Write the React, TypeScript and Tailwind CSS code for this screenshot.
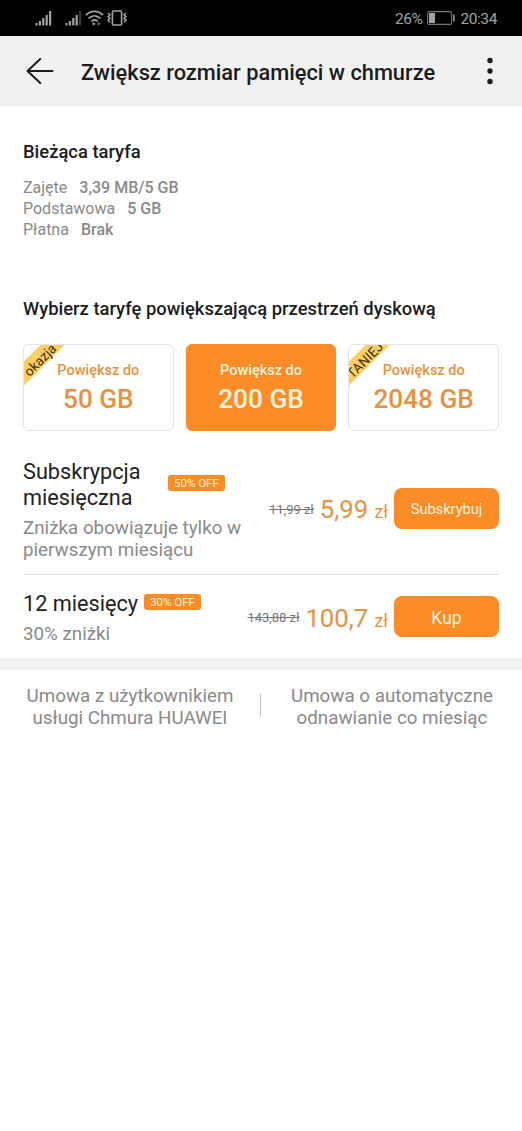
import clsx from "clsx"

interface Tariff {
  size: string
  ribbon?: string
  active?: boolean
}

interface Offer {
  title: string
  badge: string
  note: string
  oldPrice: string
  price: string
  action: string
}

const tariffs: Tariff[] = [
  { size: "50 GB", ribbon: "okazja" },
  { size: "200 GB", active: true },
  { size: "2048 GB", ribbon: "TANIEJ" },
]

const offers: Offer[] = [
  {
    title: "Subskrypcja miesięczna",
    badge: "50% OFF",
    note: "Zniżka obowiązuje tylko w pierwszym miesiącu",
    oldPrice: "11,99 zł",
    price: "5,99",
    action: "Subskrybuj",
  },
  {
    title: "12 miesięcy",
    badge: "30% OFF",
    note: "30% zniżki",
    oldPrice: "143,88 zł",
    price: "100,7",
    action: "Kup",
  },
]

const usage = [
  { label: "Zajęte", value: "3,39 MB/5 GB" },
  { label: "Podstawowa", value: "5 GB" },
  { label: "Płatna", value: "Brak" },
]

function SignalIcon({ weak = false }: { weak?: boolean }) {
  return (
    <svg width="17" height="16" viewBox="0 0 17 16" fill="#a3a3a3">
      <rect x="0.5" y="13" width="2" height="2.5" />
      <rect x="3.8" y="11" width="2.2" height="4.5" />
      <rect x="7.2" y="8" width="2.2" height="7.5" />
      <rect x="10.6" y="5" width="2.2" height="10.5" />
      <rect x="14" y="1" width="2.2" height="14.5" fill={weak ? "#3a3a3a" : "#a3a3a3"} />
    </svg>
  )
}

function StatusBar() {
  return (
    <div className="flex h-9 items-center justify-between bg-black pr-[25px] pl-[35px] text-[#a3a3a3]">
      <div className="flex items-center">
        <SignalIcon />
        <span className="w-[13px]" />
        <SignalIcon weak />
        {/* Wi-Fi */}
        <svg className="ml-[3px]" width="19" height="16" viewBox="0 0 19 16" fill="none" stroke="#a3a3a3" strokeWidth="1.8">
          <path d="M1 5.2C6 .2 13 .2 18 5.2M3.6 8.4c3.6-3.5 8.2-3.5 11.8 0M6.3 11.4c2-1.8 4.4-1.8 6.4 0" />
          <path d="M7.2 13.8h3M8.7 12.6v2.6" strokeWidth="1.3" />
          <path d="M12.4 13.8h3M13.2 12.6v2.6" stroke="#777" strokeWidth="1.2" />
        </svg>
        {/* Vibration */}
        <svg className="ml-[3px]" width="20" height="16" viewBox="0 0 20 16" fill="none" stroke="#a3a3a3" strokeWidth="1.6">
          <rect x="5.4" y="1" width="9.2" height="14" rx="1" />
          <path d="M1 3l2 1.8-2 1.8 2 1.8-2 1.8 2 2M19 3l-2 1.8 2 1.8-2 1.8 2 1.8-2 2" strokeWidth="1.5" />
        </svg>
      </div>
      <div className="flex items-center text-[15.5px] leading-none">
        <span className="pt-[3px] tracking-[-0.5px]">26%</span>
        <svg className="mx-[5px]" width="28" height="14" viewBox="0 0 28 14">
          <rect x=".6" y=".6" width="24" height="12.8" rx="1.5" fill="none" stroke="#777" strokeWidth="1.1" />
          <rect x="2" y="2" width="6" height="10" fill="#a3a3a3" />
          <rect x="26" y="3.5" width="1.8" height="7" fill="#888" />
        </svg>
        <span className="pt-[3px] tracking-[-0.4px]">20:34</span>
      </div>
    </div>
  )
}

function Header() {
  return (
    <header className="flex h-[70px] items-center bg-[#f1f1f1] pr-[28px] pl-[26px] text-[#1c1c1c]">
      <svg width="28" height="28" viewBox="0 0 28 28" fill="none" stroke="currentColor" strokeWidth="2" strokeLinecap="round" strokeLinejoin="round">
        <path d="M14.2 2L1.5 14l12.7 12M1.5 14h25" />
      </svg>
      <h1 className="ml-[27px] flex-1 pt-1 text-[21.8px] font-medium whitespace-nowrap">
        Zwiększ rozmiar pamięci w chmurze
      </h1>
      <svg width="8" height="28" viewBox="0 0 8 28" fill="currentColor">
        <circle cx="4" cy="3.5" r="2.7" />
        <circle cx="4" cy="14" r="2.7" />
        <circle cx="4" cy="24.5" r="2.7" />
      </svg>
    </header>
  )
}

function TariffCard({ size, ribbon, active }: Tariff) {
  return (
    <button
      className={clsx(
        "relative h-[87px] flex-1 overflow-hidden rounded-md border font-medium",
        active ? "border-[#fb8c28] bg-[#fb8c28] text-[#fff5dc]" : "border-[#e4e4e4] bg-white text-[#e8923f]"
      )}
    >
      {ribbon && (
        <span className="absolute top-[6px] -left-[26px] h-[17px] w-20 -rotate-45 bg-[#fdcf62] pl-[2px] text-center text-[13.5px] leading-[21px] font-normal text-[#3a2d10]">
          {ribbon}
        </span>
      )}
      <span className="block text-[14.5px] leading-5">Powiększ do</span>
      <span className="mt-[3px] block text-[26.2px] leading-[30px]">{size}</span>
    </button>
  )
}

function OfferRow({ title, badge, note, oldPrice, price, action }: Offer) {
  const isLong = action.length > 5

  return (
    <div className="flex items-center">
      <div className="w-[221px] shrink-0">
        <div className="flex items-center">
          <h3 className="max-w-[139px] text-[21.7px] leading-[26px] text-[#222]">{title}</h3>
          <span className="mb-[5px] ml-[6px] h-4 rounded-[3px] bg-[#fb8c28] px-[6px] text-[11.5px] leading-4 whitespace-nowrap text-[#fff5dc]">
            {badge}
          </span>
        </div>
        <p className="mt-[6px] text-[18.8px] leading-[22px] text-[#8a8a8a]">{note}</p>
      </div>
      <div className={clsx("flex flex-1 items-center", isLong ? "pb-1" : "pb-[3px]")}>
        <div className="flex flex-1 items-center justify-end whitespace-nowrap text-[#e8923f]">
          <span className="pt-[3px] text-[12.9px] text-[#777] line-through">{oldPrice}</span>
          <span className="ml-[6px] pt-[5px] text-[25.7px] leading-8">
            {price} <span className="text-[17.5px]">zł</span>
          </span>
        </div>
        <button
          className={clsx(
            "ml-[6px] h-[41px] w-[105px] shrink-0 rounded-lg bg-[#fb8c28] pt-[3px] text-[#fff5dc]",
            isLong ? "text-[14.6px]" : "text-[17.5px]"
          )}
        >
          {action}
        </button>
      </div>
    </div>
  )
}

export default function App() {
  return (
    <div className="min-h-screen bg-white font-[Roboto,sans-serif]">
      <StatusBar />
      <Header />

      <main>
        <section className="px-[23px] pt-[34px]">
          <h2 className="text-[18.4px] leading-6 font-medium text-[#1c1c1c]">Bieżąca taryfa</h2>
          <dl className="mt-[13px] text-[16px] leading-[21px] text-[#8a8a8a]">
            {usage.map((item) => (
              <div key={item.label} className="flex gap-3">
                <dt>{item.label}</dt>
                <dd className="font-medium">{item.value}</dd>
              </div>
            ))}
          </dl>
        </section>

        <section className="px-[23px] pt-[57px]">
          <h2 className="text-[18.4px] leading-6 font-medium whitespace-nowrap text-[#1c1c1c]">
            Wybierz taryfę powiększającą przestrzeń dyskową
          </h2>
          <div className="mt-[23px] flex gap-3">
            {tariffs.map((tariff) => (
              <TariffCard key={tariff.size} {...tariff} />
            ))}
          </div>
        </section>

        <section className="px-[23px] pt-[28px] pb-[13px]">
          <OfferRow {...offers[0]} />
          <hr className="mt-[13px] mb-4 border-[#dedede]" />
          <OfferRow {...offers[1]} />
        </section>

        <div className="h-3 bg-[#f2f2f2]" />

        <footer className="flex items-center pt-[15px] text-center text-[18.8px] leading-[22px] text-[#8a8a8a]">
          <a className="flex-1">
            Umowa z użytkownikiem
            <br />
            usługi Chmura HUAWEI
          </a>
          <span className="mb-[3px] h-[23px] w-px bg-[#c4c4c4]" />
          <a className="flex-1 pl-px">
            Umowa o automatyczne
            <br />
            odnawianie co miesiąc
          </a>
        </footer>
      </main>
    </div>
  )
}
